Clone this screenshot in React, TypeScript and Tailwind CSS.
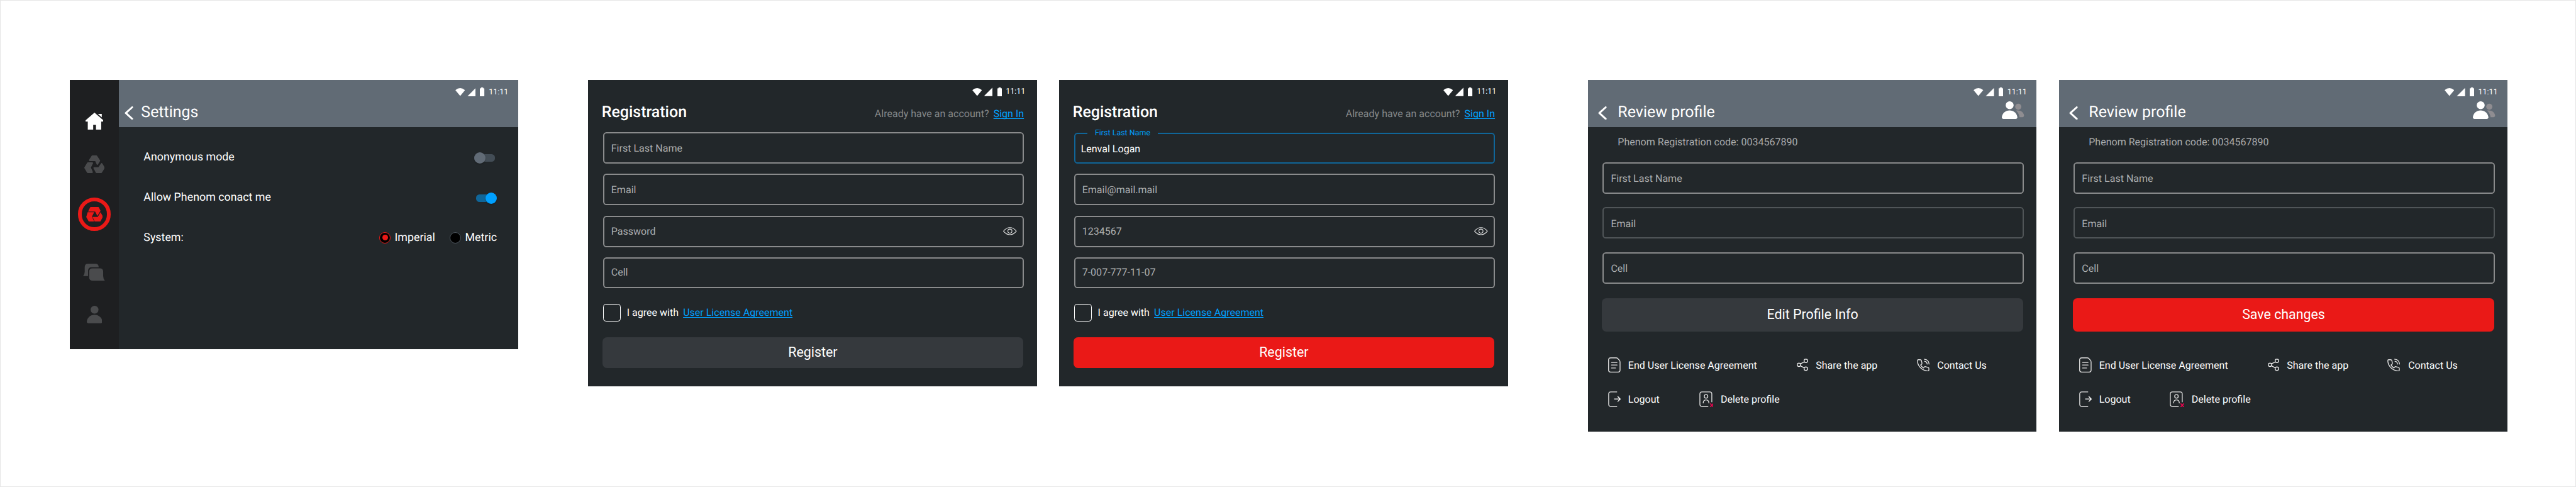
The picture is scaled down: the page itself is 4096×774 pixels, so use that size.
import type { ReactNode } from "react";
import { clsx } from "clsx";

/* ---------- icons ---------- */

const HomeIcon = () => (
  <svg viewBox="0 0 96 91" className="h-[30.3px] w-[32px] shrink-0" fill="#fff">
    <path d="M48 0 94 40Q98 44 95 48H84V91H56V66H41V91H12V48H1Q-2 44 2 40Z" />
    <path d="M66 7H87V25Z" />
  </svg>
);

const LoopIcon = () => (
  <svg viewBox="0 0 110 94" className="h-[31.3px] w-[36.7px] shrink-0" fill="#4a4b4d" stroke="#4a4b4d" strokeWidth="8" strokeLinejoin="round">
    <path d="M43 4H65L81 28 70 46 61 26H29Z" />
    <path d="M19 41H43L31 65 42 90H18L4 66Z" />
    <path d="M53 67H78L93 45 106 66 91 90H65Z" />
  </svg>
);

const LoopSolidIcon = () => (
  <svg viewBox="0 0 90 78" className="h-[26px] w-[30px]" fill="#ea1917">
    <path d="M22 1Q23 0 25 0H65Q67 0 68 2L77 20 60 48 48 24H10Z" />
    <path d="M8 28H43L31 51 43 78H16Q14 78 13 76L1 55Q0 53 1 51Z" />
    <path d="M34 53H62L77 28 89 50Q90 52 89 54L77 76Q76 78 74 78H46Z" />
  </svg>
);

const ChatIcon = () => (
  <svg viewBox="0 0 118 92" className="h-[30.6px] w-[39.3px] shrink-0" fill="#4a4b4d">
    <path d="M27 67H0Q9 58 9 44V19Q9 1 27 1H66Q84 1 84 19H46Q27 19 27 38Z" />
    <path d="M51 25H90Q108 25 108 43V66Q108 82 117 91H51Q33 91 33 73V43Q33 25 51 25Z" />
  </svg>
);

const PersonIcon = () => (
  <svg viewBox="0 0 83 93" className="h-[31px] w-[27.7px] shrink-0" fill="#4a4b4d">
    <circle cx="41.5" cy="21" r="21" />
    <path d="M0 84C2 63 20 48 41.5 48S81 63 83 84Q83 93 74 93H9Q0 93 0 84Z" />
  </svg>
);

const PeopleIcon = () => (
  <svg viewBox="0 0 120 94" className="h-[31.3px] w-[40px]">
    <circle cx="42" cy="21" r="21" fill="#fff" />
    <path d="M0 85C2 64 20 49 41.5 49S81 64 83 85Q83 94 74 94H9Q0 94 0 85Z" fill="#fff" />
    <circle cx="88" cy="29" r="16.5" fill="#8f8d91" />
    <path d="M76 50C98 46 118 58 119 77Q119 85 111 85H95Q91 63 76 50Z" fill="#8f8d91" />
  </svg>
);

const BackIcon = () => (
  <svg viewBox="0 0 46 72" className="h-[24px] w-[15.3px]" fill="none" stroke="#fff" strokeWidth="10" strokeLinecap="round" strokeLinejoin="round">
    <path d="M41 5 7 36 41 67" />
  </svg>
);

const EyeIcon = () => (
  <svg viewBox="0 0 73 43" className="h-[14.3px] w-[24.3px]" fill="none" stroke="#e4e5e5" strokeWidth="3.5">
    <path d="M2 21.5C22-4 51-4 71 21.5 51 47 22 47 2 21.5Z" />
    <circle cx="36.5" cy="21.5" r="11" />
  </svg>
);

const DocIcon = () => (
  <svg viewBox="0 0 67 81" className="h-[27px] w-[22.3px]" fill="none" stroke="#e0e0e0" strokeWidth="4.5" strokeLinecap="round">
    <path d="M14 2.500H44Q48 2.500 51 5L60 15Q64 19 64 25V68Q64 78.500 54 78.500H13Q2.500 78.500 2.500 68V13Q2.500 2.500 14 2.500Z" />
    <path d="M18 26H48M18 41H48M18 57H40" />
  </svg>
);

const ShareIcon = () => (
  <svg viewBox="0 0 61 66" className="h-[22px] w-[20.3px]" fill="none" stroke="#e8e8e8" strokeWidth="4.5">
    <circle cx="11.5" cy="33" r="9" />
    <circle cx="48.5" cy="12" r="9.5" />
    <circle cx="48.5" cy="54" r="9.5" />
    <path d="M19 28 40 17M19 38 40 49" />
  </svg>
);

const PhoneIcon = () => (
  <svg viewBox="0 0 68 69" className="h-[23px] w-[22.7px]" fill="none" stroke="#e8e8e8" strokeWidth="4.5" strokeLinecap="round" strokeLinejoin="round">
    <path d="M7 6H18Q23 6 24 10L27 24Q28 28 24 31L20 34Q25 44 35 50L39 45Q42 42 46 43L60 47Q64 48 64 53V61Q64 67 58 66.5C27 64 4 40 2.500 12 2.500 8 4 6 7 6Z" />
    <path d="M39 3Q63 5 65 29M41 14Q53 16 55 29" />
  </svg>
);

const LogoutIcon = () => (
  <svg viewBox="0 0 69 83" className="h-[27.7px] w-[23px]" fill="none" stroke="#e0e0e0" strokeWidth="4.5" strokeLinejoin="round">
    <path d="M48 3H14Q3 3 3 14V69Q3 80 14 80H48" />
    <path d="M32 41H65M51 27 65 41 51 55" stroke="#fff" />
  </svg>
);

const DeleteIcon = () => (
  <svg viewBox="0 0 77 85" className="h-[28.3px] w-[25.7px]" fill="none" stroke="#e0e0e0" strokeWidth="4.5">
    <path d="M48 80H14Q3 80 3 69V14Q3 3 14 3H56Q67 3 67 14V58" />
    <circle cx="36" cy="27" r="9.5" />
    <path d="M21 64V60Q22 46 36 46T51 60V64" />
    <path d="M58 65 76 84M76 65 58 84" stroke="#f0044f" strokeWidth="5.5" />
  </svg>
);

/* ---------- shared parts ---------- */

function StatusBar({ className }: { className: string }) {
  return (
    <div className={clsx("flex h-[30px] shrink-0 items-end justify-end text-[14px] leading-[15px] text-white", className)}>
      <svg viewBox="0 0 52 42" className="mb-[0.7px] h-[14px] w-[17.4px]" fill="#fff">
        <path d="M0 11Q26-11 52 11L26 42Z" />
      </svg>
      <svg viewBox="0 0 46 46" className="ml-[4px] h-[15.3px] w-[15.3px]" fill="#fff">
        <path d="M2 46Q0 46 1 44L44 1Q46 0 46 2V44Q46 46 44 46Z" />
      </svg>
      <svg viewBox="0 0 24 48" className="mr-[7.5px] ml-[8px] h-[16px] w-[8px]" fill="#fff">
        <path d="M6 0H18V4H21Q24 4 24 7V45Q24 48 21 48H3Q0 48 0 45V7Q0 4 3 4H6Z" />
      </svg>
      11:11
    </div>
  );
}

function Field({ children, className, icon }: { children: ReactNode; className?: string; icon?: ReactNode }) {
  return (
    <div className={clsx("relative flex w-[750.5px] items-center justify-between rounded-[6px] border-[2.3px] pr-[10px] text-[18px] leading-[24px]", className)}>
      {children}
      {icon}
    </div>
  );
}

function Button({ children, className }: { children: ReactNode; className: string }) {
  return (
    <button className={clsx("-ml-[1.3px] flex w-[751px] shrink-0 items-center justify-center rounded-[8px] text-[24px] leading-[28px] text-white", className)}>
      {children}
    </button>
  );
}

function Link({ children }: { children: ReactNode }) {
  return (
    <a className="text-[#00a0ff] underline decoration-1 underline-offset-2 [text-decoration-skip-ink:none]">{children}</a>
  );
}

/* ---------- settings ---------- */

function Toggle({ on }: { on?: boolean }) {
  return (
    <span className={clsx("mx-[3px] mt-[4px] flex h-[14px] w-[34px] items-center rounded-[6px]", on ? "justify-end bg-[#106699]" : "bg-[#434d56]")}>
      <span className={clsx("-mx-[3px] size-[20px] rounded-full shadow-[0_1px_2px_rgba(0,0,0,0.4)]", on ? "bg-[#00a0ff]" : "bg-[#616b76]")} />
    </span>
  );
}

function Radio({ label, checked }: { label: string; checked?: boolean }) {
  return (
    <label className="flex items-center gap-[7px]">
      <span className={clsx("flex size-[20px] items-center justify-center rounded-full border bg-black", checked ? "border-[#ea1917]" : "border-[#4d565e]")}>
        {checked && <span className="size-[10px] rounded-full bg-[#ea1917]" />}
      </span>
      {label}
    </label>
  );
}

function SettingsScreen() {
  return (
    <section className="flex h-[480px] w-[800px] shrink-0 bg-[#22272a]">
      <nav className="flex w-[88px] shrink-0 flex-col items-center bg-[#1e1f21] pt-[58.7px]">
        <HomeIcon />
        <div className="h-[45.7px]" />
        <LoopIcon />
        <div className="mt-[44.3px] mb-[58.4px] flex size-[59px] shrink-0 items-center justify-center rounded-full border-[6.8px] border-[#ea1917]">
          <LoopSolidIcon />
        </div>
        <ChatIcon />
        <div className="h-[44.7px]" />
        <PersonIcon />
      </nav>
      <div className="flex-1">
        <header className="h-[84px] bg-[#616b75]">
          <StatusBar className="pr-[17.5px]" />
          <div className="flex h-[54px] items-center gap-[14.2px] pt-[4px] pl-[10px] text-[28px] leading-[36px] text-white">
            <BackIcon />
            <h1 className="-mt-[1px]">Settings</h1>
          </div>
        </header>
        <div className="pt-[17.5px] pr-[38px] pl-[44px] text-[20px] leading-[24px] text-white">
          <div className="flex h-[72px] items-center justify-between">
            Anonymous mode
            <Toggle />
          </div>
          <div className="flex h-[72px] items-center justify-between">
            Allow Phenom conact me
            <Toggle on />
          </div>
          <div className="flex h-[72px] items-center justify-between">
            System:
            <div className="flex gap-[26.5px]">
              <Radio label="Imperial" checked />
              <Radio label="Metric" />
            </div>
          </div>
        </div>
      </div>
    </section>
  );
}

/* ---------- registration ---------- */

const plain = "border-[#8a8b8c] pl-[12.3px] text-[#acaeaf]";

function RegistrationScreen({ filled }: { filled?: boolean }) {
  return (
    <section className="h-[546px] w-[800px] shrink-0 bg-[#22272a]">
      <StatusBar className="pr-[20.5px] pb-[0.7px]" />
      <div className="mt-[10.7px] flex h-[36px] justify-between pr-[23px] pl-[24px]">
        <h1 className="text-[28px] leading-[36px] font-medium text-white">Registration</h1>
        <p className="flex gap-[8px] pt-[7.5px] text-[18px] leading-[24px] text-[#868889]">
          Already have an account?
          <Link>Sign In</Link>
        </p>
      </div>
      <form className="mt-[17px] flex flex-col pl-[26.3px]">
        {filled ? (
          <Field className="mt-[0.5px] h-[55.5px] border-[#106699] pt-[3px] pl-[10px] text-white">
            <span className="absolute -top-[8.5px] left-[22px] flex h-[16px] w-[125px] items-center bg-[#22272a] pl-[13px] text-[14px] leading-[16px] text-[#00a0ff]">
              First Last Name
            </span>
            Lenval Logan
          </Field>
        ) : (
          <Field className={clsx(plain, "mb-[0.5px] h-[55.5px] pt-[2px]")}>First Last Name</Field>
        )}
        <Field className={clsx(plain, "mt-[17.5px] h-[56px] pt-[2px]")}>{filled ? "Email@mail.mail" : "Email"}</Field>
        <Field className={clsx(plain, "mt-[19px] h-[56px]")} icon={<EyeIcon />}>
          {filled ? "1234567" : "Password"}
        </Field>
        <Field className={clsx(plain, "mt-[18px] h-[56px] pb-[1px]")}>{filled ? "7-007-777-11-07" : "Cell"}</Field>
        <label className="mt-[27px] flex h-[32px] items-center text-[18px] leading-[24px] text-white">
          <span className="mr-[10.5px] size-[32px] rounded-[5px] border border-white" />
          <span className="mr-[8px]">I agree with</span>
          <Link>User License Agreement</Link>
        </label>
        <Button className={clsx("mt-[27.5px] h-[55px]", filled ? "bg-[#ea1917]" : "bg-[#35393d]")}>Register</Button>
      </form>
    </section>
  );
}

/* ---------- profile ---------- */

function Action({ icon, label, className }: { icon: ReactNode; label: string; className?: string }) {
  return (
    <div className={clsx("flex shrink-0 items-center", className)}>
      {icon}
      <span className="pt-[1px]">{label}</span>
    </div>
  );
}

function ProfileScreen({ editing }: { editing?: boolean }) {
  return (
    <section className="h-[627px] w-[800px] shrink-0 bg-[#22272a]">
      <header className="h-[84px] bg-[#616b75]">
        <StatusBar className="pr-[17.5px]" />
        <div className="flex h-[54px] items-center pt-[4px] pr-[22px] pl-[18px] text-[28px] leading-[36px] text-white">
          <BackIcon />
          <h1 className="-mt-[1px] ml-[19.8px] flex-1">Review profile</h1>
          <div className="mb-[9px]">
            <PeopleIcon />
          </div>
        </div>
      </header>
      <p className="mt-[15px] pl-[53px] text-[18px] leading-[24px] text-[#a9abac]">Phenom Registration code: 0034567890</p>
      <div className="mt-[24px] flex flex-col pl-[26.3px]">
        <Field className={clsx(plain, "h-[56px] pt-[2px]")}>First Last Name</Field>
        <Field className="mt-[24px] h-[56px] border-[#505558] pt-[3px] pl-[12.3px] text-[#acaeaf]">Email</Field>
        <Field className={clsx(plain, "mt-[24.5px] h-[56px] pt-[1px]")}>Cell</Field>
        <Button className={clsx("mt-[26px] h-[60px]", editing ? "bg-[#ea1917]" : "bg-[#35393d]")}>
          {editing ? "Save changes" : "Edit Profile Info"}
        </Button>
      </div>
      <div className="mt-[45px] flex flex-col gap-[33px] pl-[35.7px] text-[18px] leading-[24px] text-white">
        <div className="flex h-[28px]">
          <Action className="w-[336.3px] gap-[13.5px]" icon={<DocIcon />} label="End User License Agreement" />
          <Action className="w-[214px] gap-[14px]" icon={<ShareIcon />} label="Share the app" />
          <Action className="gap-[14px]" icon={<PhoneIcon />} label="Contact Us" />
        </div>
        <div className="flex h-[28px]">
          <Action className="w-[162.3px] gap-[12.8px]" icon={<LogoutIcon />} label="Logout" />
          <Action className="gap-[12.8px]" icon={<DeleteIcon />} label="Delete profile" />
        </div>
      </div>
    </section>
  );
}

export default function App() {
  return (
    <main className="h-screen w-full overflow-hidden border border-[#e6e6e6] bg-white font-['Roboto',sans-serif] [text-rendering:geometricPrecision]">
      <div className="flex items-start pt-[141px] pl-[123px] [zoom:0.8916]">
        <SettingsScreen />
        <div className="ml-[125px] flex gap-[40px]">
          <RegistrationScreen />
          <RegistrationScreen filled />
        </div>
        <div className="ml-[143px] flex items-start gap-[40px]">
          <ProfileScreen />
          <ProfileScreen editing />
        </div>
      </div>
    </main>
  );
}
